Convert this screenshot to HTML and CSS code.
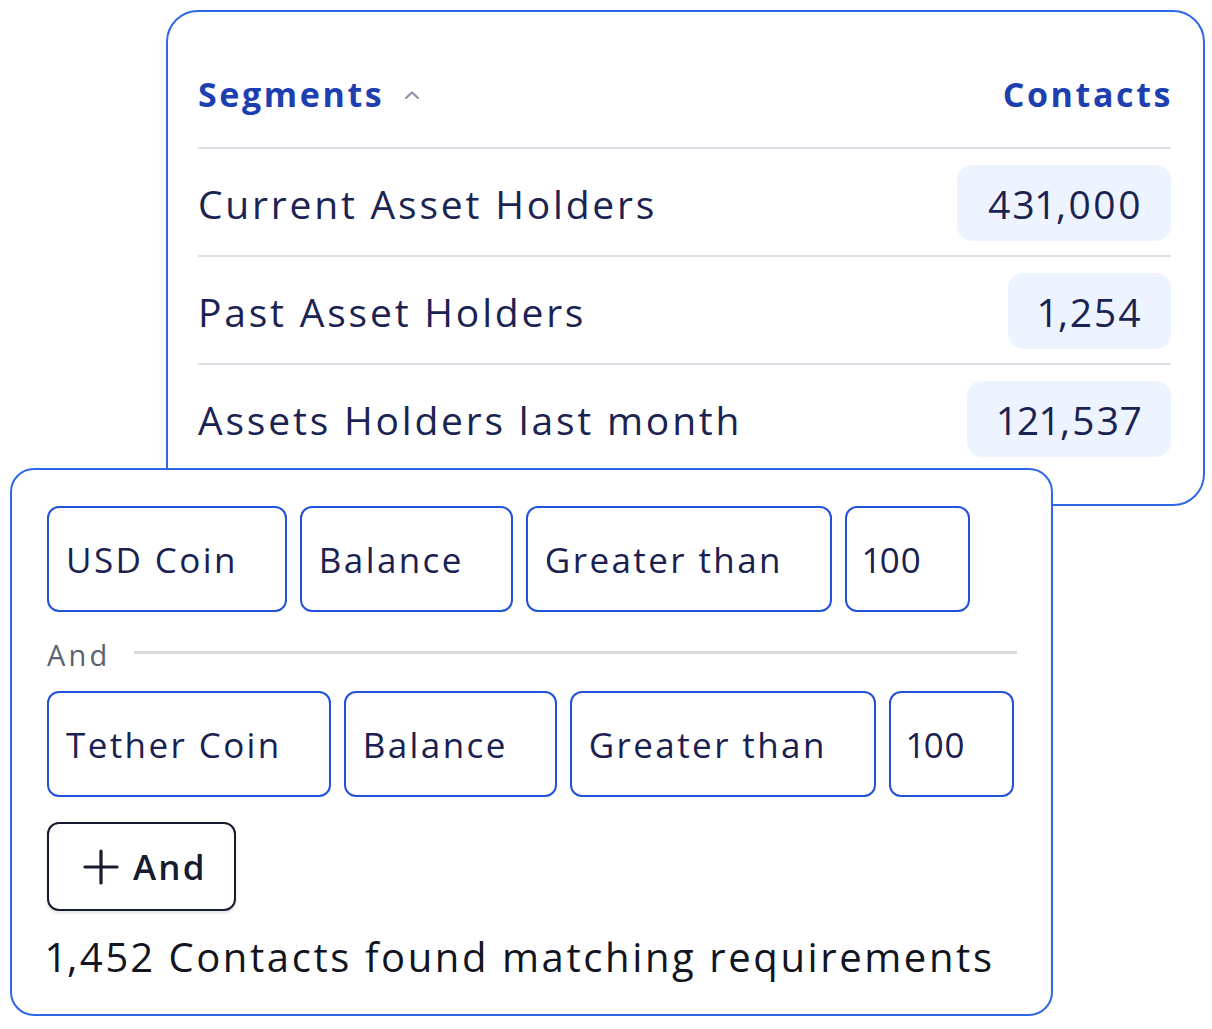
FILE: index.html
```html
<!DOCTYPE html>
<html lang="en">
<head>
<meta charset="utf-8">
<title>Segments</title>
<link rel="stylesheet" href="styles.css">
</head>
<body>
<div class="stage">
  <section class="segments">
    <div class="seg-head">
      <div class="seg-title">Segments
        <svg class="caret" width="16" height="10" viewBox="0 0 16 10"><polyline points="2,8 8,2.5 14,8" fill="none" stroke="#8a94a6" stroke-width="2.2" stroke-linecap="round" stroke-linejoin="round"/></svg>
      </div>
      <div class="seg-title right">Contacts</div>
    </div>
    <div class="seg-row"><span class="seg-name">Current Asset Holders</span><span class="pill">431,000</span></div>
    <div class="seg-row"><span class="seg-name">Past Asset Holders</span><span class="pill">1,254</span></div>
    <div class="seg-row last"><span class="seg-name">Assets Holders last month</span><span class="pill">121,537</span></div>
  </section>

  <section class="builder">
    <div class="cond-row">
      <div class="field">USD Coin</div>
      <div class="field">Balance</div>
      <div class="field">Greater than</div>
      <div class="field num">100</div>
    </div>
    <div class="and-sep"><span>And</span><i class="rule"></i></div>
    <div class="cond-row">
      <div class="field">Tether Coin</div>
      <div class="field">Balance</div>
      <div class="field">Greater than</div>
      <div class="field num">100</div>
    </div>
    <button class="add-btn">
      <svg width="36" height="36" viewBox="0 0 36 36"><path d="M18 2V34M2 18H34" stroke="#161b2e" stroke-width="3.2" stroke-linecap="round"/></svg>
      <span>And</span>
    </button>
    <p class="result">1,452 Contacts found matching requirements</p>
  </section>
</div>
</body>
</html>
```
FILE: styles.css
```css
* { box-sizing: border-box; }
html, body { margin: 0; padding: 0; background: #ffffff; }
body { font-family: "Open Sans", "Noto Sans", sans-serif; font-variant-numeric: proportional-nums; }

.stage { width: 1212px; height: 1029px; padding-top: 10px; }

.segments {
  margin-left: 166px;
  width: 1039px;
  height: 496px;
  border: 2px solid #2f68e6;
  border-radius: 32px;
  padding: 62px 32px 0 30px;
  background: #fff;
}
.seg-head {
  display: flex;
  justify-content: space-between;
  align-items: center;
  height: 40px;
  margin-bottom: 33px;
}
.seg-head + .seg-row { border-top: 2px solid #dcdfe5; }
.seg-title {
  font-size: 34px;
  font-weight: 700;
  color: #1e3fb0;
  letter-spacing: 2.6px;
  display: flex;
  align-items: center;
}
.seg-title.right { margin-right: -2px; }
.caret { margin-left: 20px; margin-top: 2px; }
.seg-row {
  display: flex;
  justify-content: space-between;
  align-items: center;
  padding: 16px 0 14px;
  border-bottom: 2px solid #dcdfe5;
}
.seg-row.last { border-bottom: none; }
.seg-name {
  font-size: 39px;
  color: #1b2352;
  letter-spacing: 2.8px;
}
.pill {
  height: 76px;
  display: flex;
  align-items: center;
  padding: 0 28px 0 31px;
  border-radius: 15px;
  background: #eef4ff;
  font-size: 39px;
  color: #1b2352;
  letter-spacing: 2.2px;
}

.builder {
  position: relative;
  margin-left: 10px;
  margin-top: -38px;
  width: 1043px;
  height: 548px;
  border: 2px solid #2f68e6;
  border-radius: 24px;
  background: #fff;
  padding: 36px 35px 0 35px;
}
.cond-row { display: flex; gap: 13px; }
.field {
  height: 106px;
  display: flex;
  align-items: center;
  padding: 0 47px 0 17px;
  border: 2px solid #2352d8;
  border-radius: 12px;
  font-size: 35px;
  color: #1a2150;
  letter-spacing: 2.4px;
}
.field.num { padding-right: 47px; letter-spacing: 0.5px; }
.and-sep {
  height: 79px;
  display: flex;
  align-items: center;
  gap: 24px;
}
.and-sep span { font-size: 29px; color: #5b6270; letter-spacing: 3.2px; padding-top: 5px; }
.and-sep .rule { flex: 1; height: 3px; background: #d8d8d8; margin-right: -1px; margin-top: 2px; }

.add-btn {
  margin-top: 25px;
  height: 89px;
  display: flex;
  align-items: center;
  gap: 14px;
  padding: 0 27px 0 34px;
  border: 2px solid #161b2e;
  border-radius: 12px;
  background: #fff;
  font-family: inherit;
  font-size: 35px;
  font-weight: 600;
  color: #161b2e;
  letter-spacing: 2.2px;
  box-shadow: 0 2px 3px rgba(20, 25, 45, 0.12);
}
.result {
  margin: 18px 0 0;
  font-size: 40px;
  color: #111522;
  letter-spacing: 2.6px;
}
```
